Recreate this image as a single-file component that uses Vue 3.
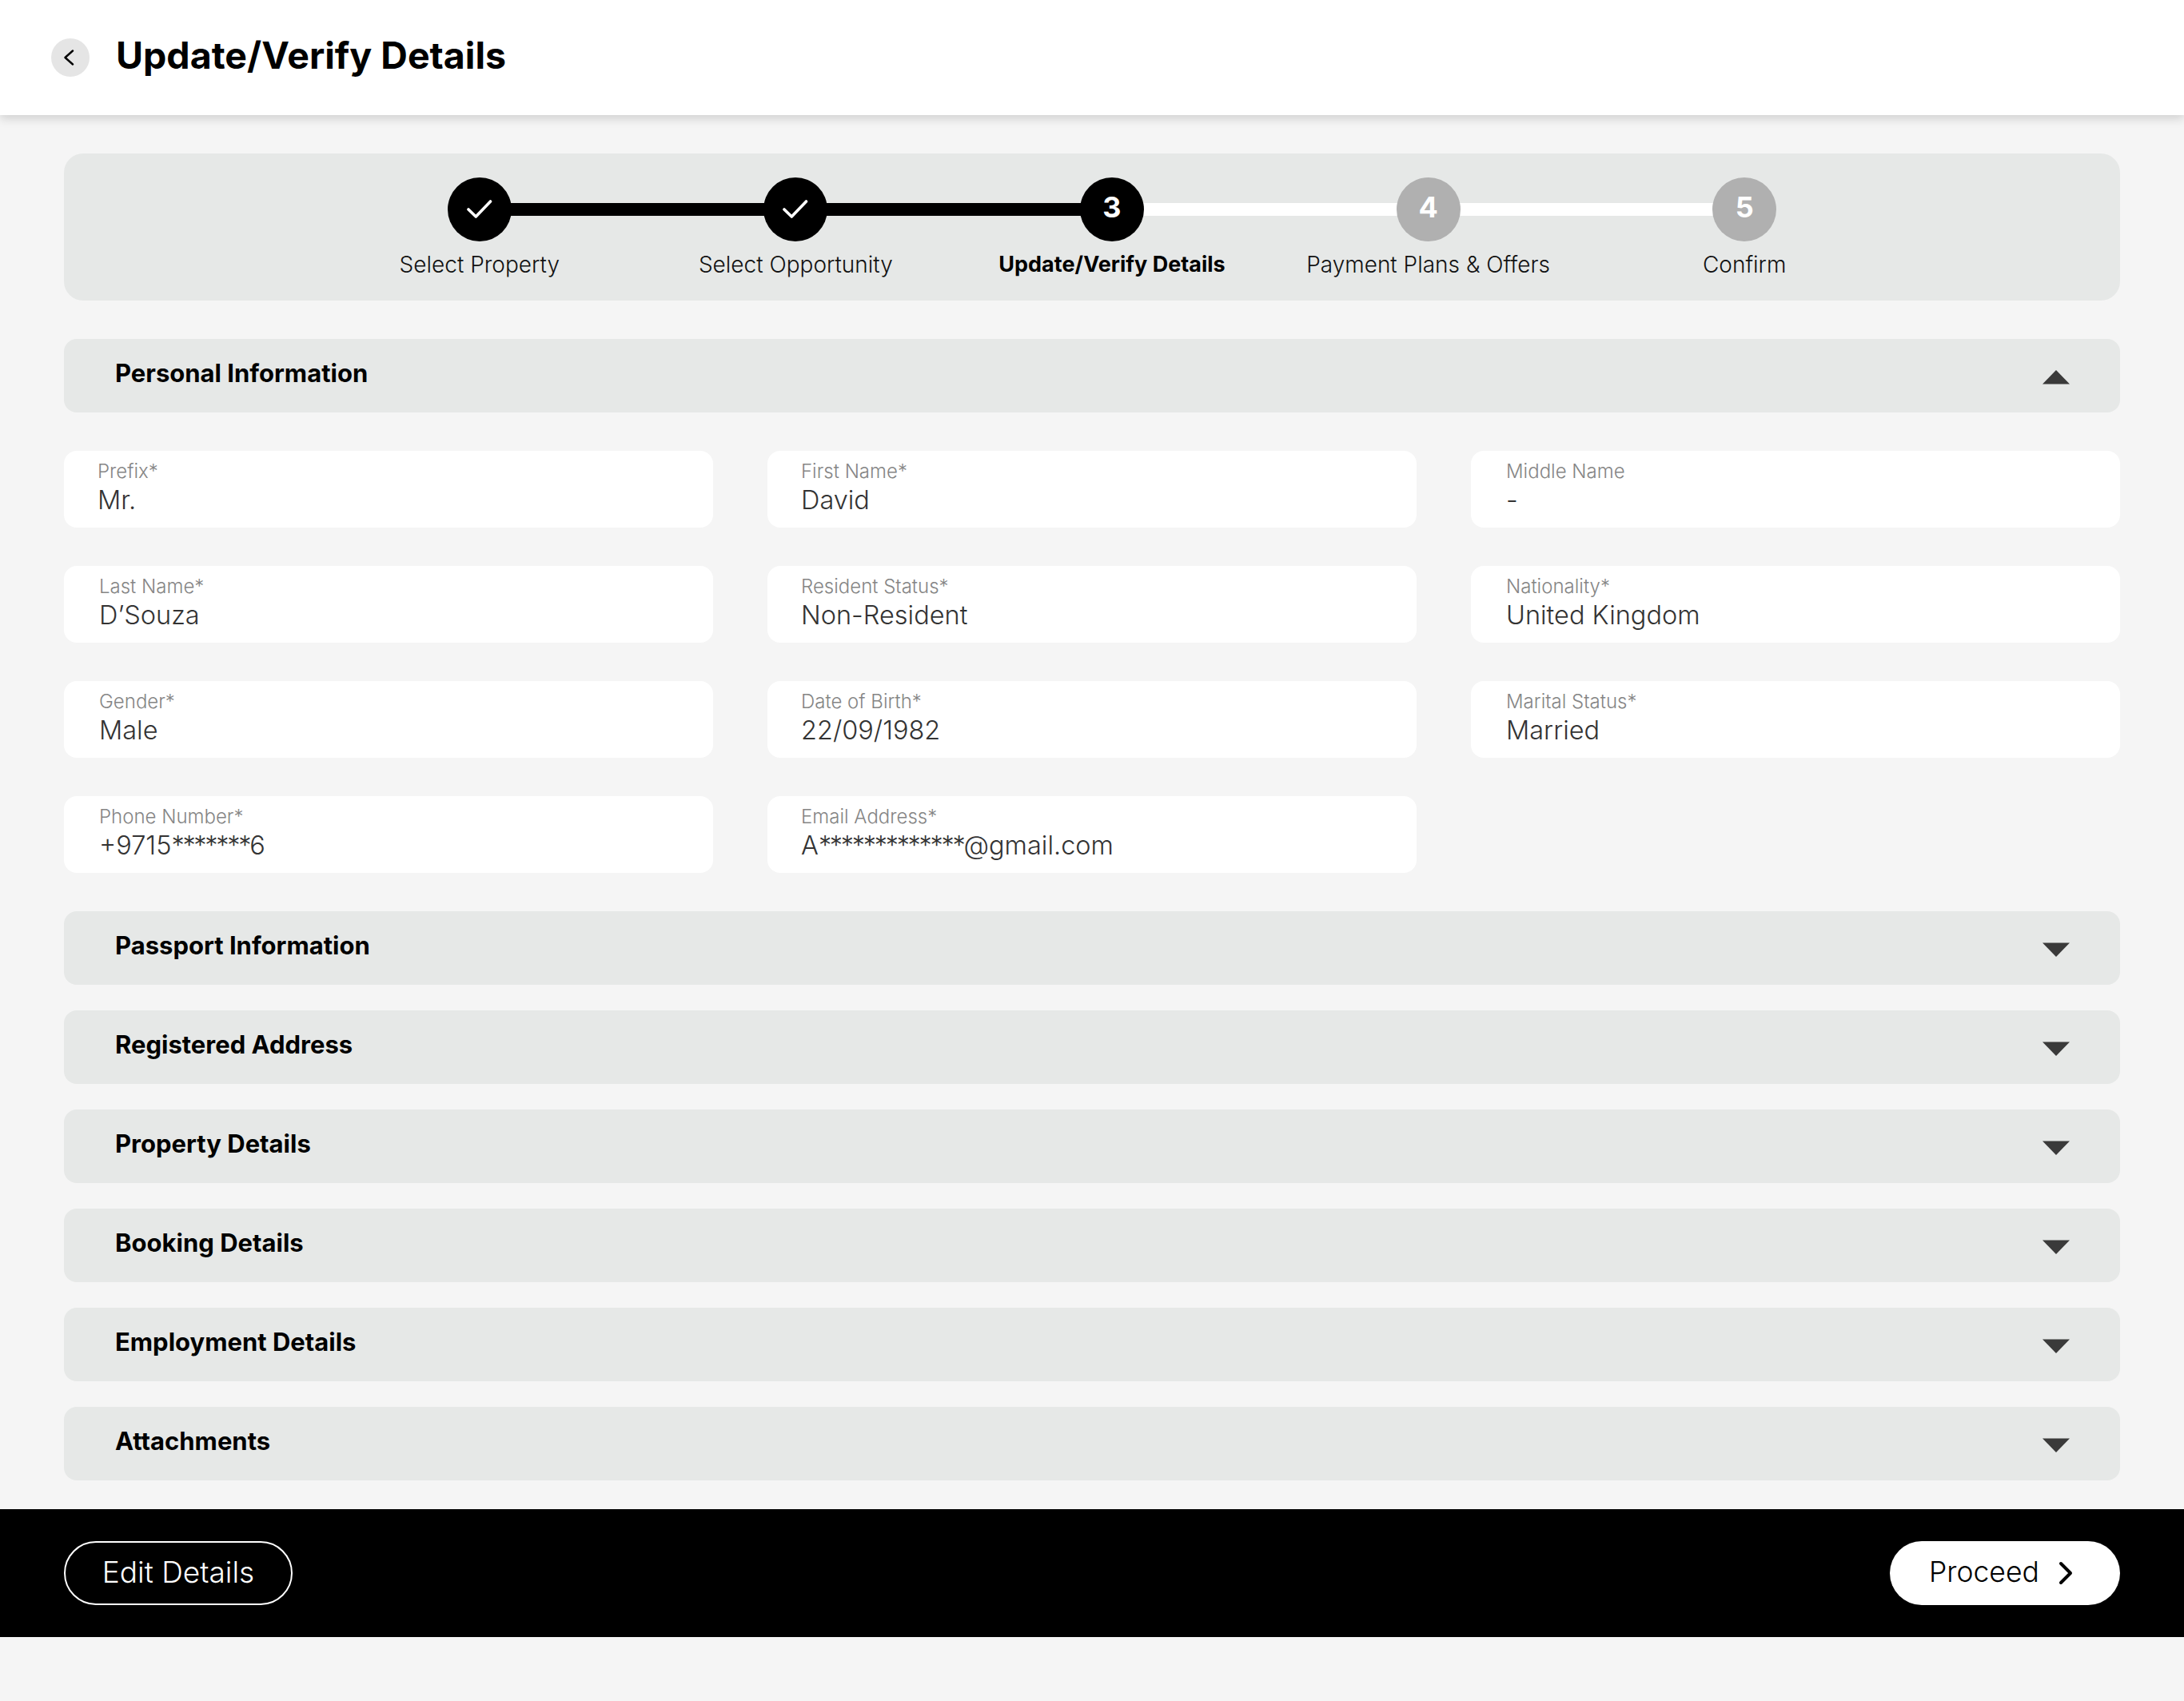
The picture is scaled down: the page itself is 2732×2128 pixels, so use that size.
<script setup>
const steps = [
  { label: 'Select Property', state: 'done' },
  { label: 'Select Opportunity', state: 'done' },
  { label: 'Update/Verify Details', state: 'current', n: 3 },
  { label: 'Payment Plans & Offers', state: 'todo', n: 4 },
  { label: 'Confirm', state: 'todo', n: 5 },
]
const fields = [
  ['Prefix*', 'Mr.'], ['First Name*', 'David'], ['Middle Name', '-'],
  ['Last Name*', 'D’Souza'], ['Resident Status*', 'Non-Resident'], ['Nationality*', 'United Kingdom'],
  ['Gender*', 'Male'], ['Date of Birth*', '22/09/1982'], ['Marital Status*', 'Married'],
  ['Phone Number*', '+9715*******6'], ['Email Address*', 'A*************@gmail.com'],
]
const parts = (v) => v.split(/(\*+)/).filter(Boolean)
const sections = ['Passport Information', 'Registered Address', 'Property Details', 'Booking Details', 'Employment Details', 'Attachments']
</script>

<template>
  <div class="page">
    <header class="top">
      <span class="back">
        <svg width="16" height="24" viewBox="0 0 16 24"><path d="M11 3.5 1.5 12 11 20.5" fill="none" stroke="#000" stroke-width="2.4" stroke-linecap="round" stroke-linejoin="round"/></svg>
      </span>
      <h1>Update/Verify Details</h1>
    </header>
    <main class="main">
      <section class="stepper">
        <div v-for="(s, i) in steps" :key="s.label" class="step" :class="s.state">
          <div class="track">
            <i v-if="i < steps.length - 1" class="line" :class="{ dark: s.state === 'done' }"></i>
            <span class="dot">
              <svg v-if="s.state === 'done'" width="32" height="24" viewBox="0 0 32 24"><path d="M2 12 11.3 21 29.5 2" fill="none" stroke="#fff" stroke-width="3.6" stroke-linecap="round" stroke-linejoin="round"/></svg>
              <span v-else class="num">{{ s.n }}</span>
            </span>
          </div>
          <span class="step-label">{{ s.label }}</span>
        </div>
      </section>

      <div class="bar">
        <span>Personal Information</span>
        <svg width="34" height="18" viewBox="0 0 34 18"><path d="M17 0 34 17.5 0 17.5Z" fill="#3a3a3a"/></svg>
      </div>

      <div class="grid">
        <div v-for="f in fields" :key="f[0]" class="field">
          <label>{{ f[0] }}</label>
          <div class="value"><span v-for="(p, i) in parts(f[1])" :key="i" :class="{ mask: p[0] === '*' }">{{ p }}</span></div>
        </div>
      </div>

      <div class="stack">
        <div v-for="s in sections" :key="s" class="bar">
          <span>{{ s }}</span>
          <svg width="34" height="18" viewBox="0 0 34 18"><path d="M0 .5 34 .5 17 18Z" fill="#3a3a3a"/></svg>
        </div>
      </div>
    </main>
    <footer class="foot">
      <button class="btn ghost"><span>Edit Details</span></button>
      <button class="btn solid"><span>Proceed</span>
        <svg width="18" height="30" viewBox="0 0 18 30"><path d="M3 3 15 15 3 27" fill="none" stroke="#000" stroke-width="4" stroke-linecap="round" stroke-linejoin="round"/></svg>
      </button>
    </footer>
  </div>
</template>

<style>
html, body { margin: 0; background: #f5f5f5; }
</style>

<style scoped>
.page { min-height: 2128px; background: #f5f5f5; font-family: "Inter", "Noto Sans", sans-serif; color: #000; }
.top { height: 144px; background: #fff; box-shadow: 0 4px 12px rgba(0,0,0,.16); display: flex; align-items: center; padding-left: 64px; box-sizing: border-box; gap: 33px; position: relative; }
.back { width: 48px; height: 48px; border-radius: 50%; background: #e5e5e5; display: flex; align-items: center; justify-content: center; }
h1 { margin: 0; font-size: 46.5px; font-weight: 700; line-height: 1; position: relative; top: -3px; }
.main { padding: 48px 80px 36px; }
.stepper { height: 184px; box-sizing: border-box; background: #e6e8e7; border-radius: 24px; padding: 30px 272px 0 322px; display: grid; grid-template-columns: repeat(5, 1fr); margin-bottom: 48px; }
.step { display: flex; flex-direction: column; align-items: center; }
.track { position: relative; width: 100%; height: 80px; display: flex; justify-content: center; }
.dot { position: relative; width: 80px; height: 80px; border-radius: 50%; display: flex; align-items: center; justify-content: center; font-size: 36px; font-weight: 700; color: #fff; background: #000; }
.num { position: relative; top: -3px; }
.todo .dot { background: #b0b0b0; }
.line { position: absolute; left: 50%; width: 100%; top: 32px; height: 16px; background: #fff; }
.line.dark { background: #000; }
.step-label { margin-top: 7px; font-size: 28px; font-weight: 300; line-height: 44px; white-space: nowrap; color: #111; }
.current .step-label { font-size: 27px; font-weight: 700; color: #000; }
.bar { height: 92px; box-sizing: border-box; background: #e6e8e7; border-radius: 16px; display: flex; justify-content: space-between; padding: 21px 63px 0 64px; font-size: 31px; font-weight: 700; line-height: 44px; }
.bar svg { margin-top: 18px; }
.grid { display: grid; grid-template-columns: repeat(3, 812px); column-gap: 68px; row-gap: 48px; margin: 48px 0; }
.field { height: 96px; box-sizing: border-box; background: #fff; border-radius: 16px; padding: 12px 42px 0; }
.field:nth-child(3n), .field:nth-child(n+4):nth-child(3n+1) { padding-left: 44px; }
.field label { display: block; font-size: 24px; font-weight: 300; line-height: 28px; color: #858585; }
.value { font-size: 32.5px; font-weight: 300; line-height: 43px; color: #333; }
.mask { letter-spacing: -2.3px; }
.stack { display: flex; flex-direction: column; gap: 32px; }
.foot { height: 160px; background: #000; display: flex; align-items: center; justify-content: space-between; padding: 0 80px; }
.btn { height: 80px; border-radius: 40px; font-family: inherit; font-weight: 300; box-sizing: border-box; display: flex; align-items: center; }
.btn span { position: relative; top: -2px; }
.ghost { width: 286px; background: transparent; color: #fff; border: 2px solid #fff; font-size: 37px; justify-content: center; }
.solid { width: 288px; background: #fff; color: #000; border: 0; font-size: 35.5px; padding: 0 0 0 49px; gap: 24px; }
</style>
